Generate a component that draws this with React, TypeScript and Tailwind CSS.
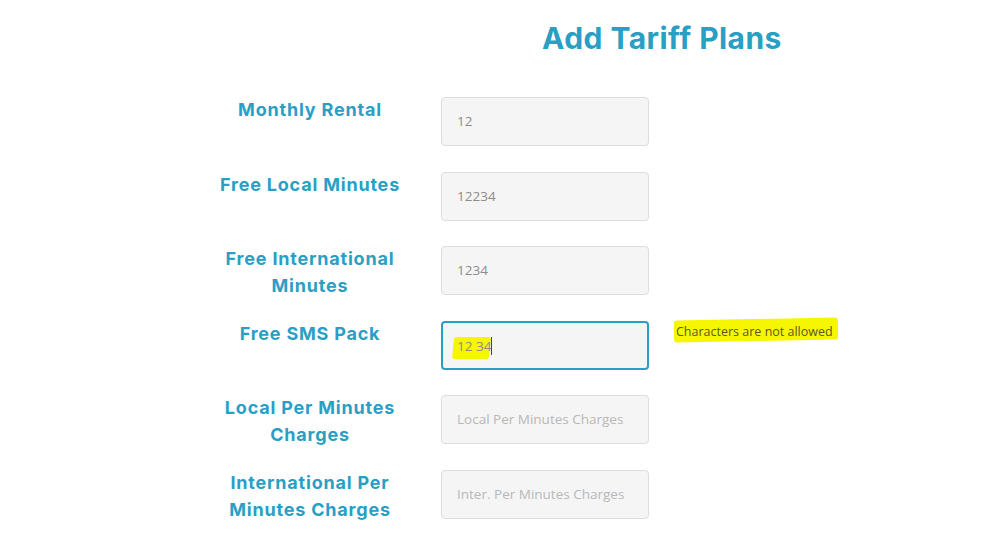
const rows = [
  { label: ['Monthly Rental'], value: '12' },
  { label: ['Free Local Minutes'], value: '12234' },
  { label: ['Free International', 'Minutes'], value: '1234' },
  { label: ['Free SMS Pack'], value: '12 34', focused: true },
  { label: ['Local Per Minutes', 'Charges'], placeholder: 'Local Per Minutes Charges' },
  { label: ['International Per', 'Minutes Charges'], placeholder: 'Inter. Per Minutes Charges' },
];

function Field({ value, placeholder, focused }: { value?: string; placeholder?: string; focused?: boolean }) {
  if (focused) {
    return (
      <div className="relative flex h-[49px] w-[208px] items-center rounded-[4px] border-2 border-[#2a9fc4] bg-[#f5f5f5] pl-[14px] text-[13.5px] text-[#8c8c8c]">
        <span className="absolute left-[10px] top-[14px] h-[22px] w-[37px] -skew-x-6 rounded-[3px] bg-[#f6f600]" />
        <span className="relative mt-[2px]">{value}</span>
        <span className="relative mt-[2px] h-[18px] w-px bg-[#444]" />
      </div>
    );
  }
  return (
    <div className="flex h-[49px] w-[208px] items-center rounded-[4px] border border-[#dddddd] bg-[#f5f5f5] pl-[15px] text-[13.5px]">
      {value ? (
        <span className="text-[#8c8c8c]">{value}</span>
      ) : (
        <span className="text-[#b8b8b8]">{placeholder}</span>
      )}
    </div>
  );
}

export default function App() {
  return (
    <div
      className="h-[538px] w-[986px] overflow-hidden bg-white"
      style={{ fontFamily: '"Open Sans", sans-serif' }}
    >
      <h1
        className="pl-[542px] pt-[20px] text-[30px] font-bold leading-[36px] tracking-[0.45px] text-[#2a9fc4]"
        style={{ fontFamily: 'Inter, sans-serif' }}
      >
        Add Tariff Plans
      </h1>
      <div className="mt-[41px] flex flex-col gap-[25.5px] pl-[200px]">
        {rows.map((r, i) => (
          <div key={i} className="flex h-[49px] items-start">
            <div
              className="mt-[-1px] w-[220px] text-center text-[18px] font-bold leading-[27px] tracking-[0.8px] text-[#2a9fc4]"
              style={{ fontFamily: 'Inter, sans-serif' }}
            >
              {r.label.map((l, j) => (
                <div key={j} className="whitespace-nowrap">{l}</div>
              ))}
            </div>
            <div className="ml-[21px]">
              <Field value={r.value} placeholder={r.placeholder} focused={r.focused} />
            </div>
            {r.focused && (
              <div className="relative ml-[27px] mt-[-3px]">
                <span className="absolute left-[-2px] top-[1px] h-[22px] w-[164px] -rotate-1 rounded-[3px] bg-[#f6f600]" />
                <span className="relative text-[12.5px] leading-[18px] text-[#5a5a1e]">
                  Characters are not allowed
                </span>
              </div>
            )}
          </div>
        ))}
      </div>
    </div>
  );
}
